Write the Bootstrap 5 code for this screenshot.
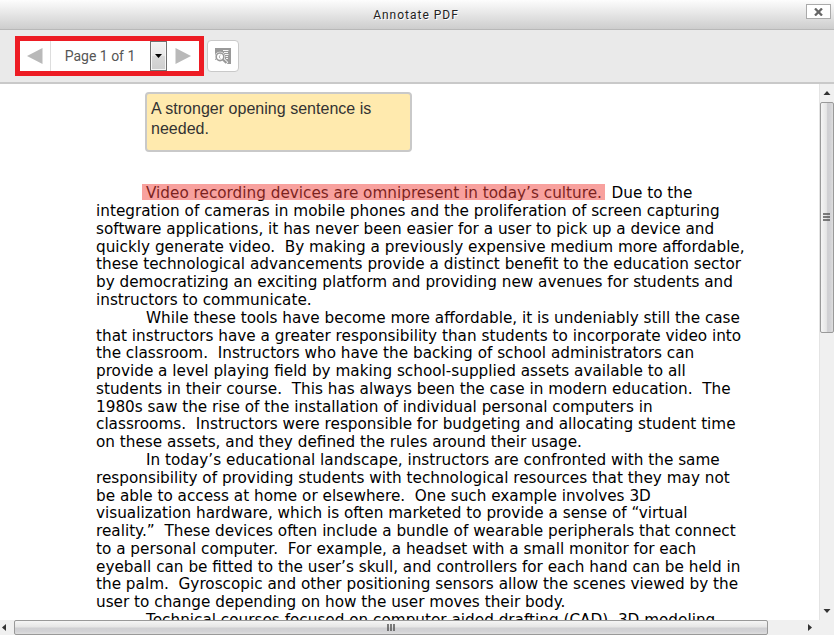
<!DOCTYPE html>
<html lang="en">
<head>
<meta charset="utf-8">
<title>Annotate PDF</title>
<link href="https://cdn.jsdelivr.net/npm/bootstrap@5.3.0/dist/css/bootstrap.min.css" rel="stylesheet">
<style>
body{height:635px;overflow:hidden;background:#fff}
.titlebar{height:30px;background:linear-gradient(#fdfdfd,#cdcdcd);border-bottom:1px solid #b8b8b8;font:12px/30px Roboto,sans-serif;letter-spacing:1px;color:#222;text-shadow:1px 1px 0 #fff}
.titlebar span{padding-right:2px}
.close-btn{right:3px;top:4px;width:25px;height:15px;border:1px solid #aaa;background:#fff}
.toolbar{height:54px;background:#eaeaea;border-bottom:2px solid #c9c9c9;padding:6px 0 0 15px;gap:3px}
.pager{width:189px;height:40px;border:5px solid #ed1c24;background:#fff}
.pg-btn{width:31px;padding:0;border:0;border-radius:0;background:#fff;line-height:1}
.pg-prev{width:30px}
.pg-label{width:100px;border-left:1px solid #ddd;font:14px/30px Roboto,sans-serif;color:#555;padding-right:1px}
.pg-drop{width:17px;border:1px solid #707070;background:linear-gradient(#f3f3f3,#e8e8e8 48%,#d8d8d8 52%,#cecece);box-shadow:inset 0 0 0 1px #f6f6f6}
.find-btn{width:32px;height:32px;border:1px solid #c9c9c9;border-radius:4px;background:#fff;margin-top:4px}
.viewer{height:536px}
.paper{overflow:hidden;padding:8px 0 0 96px}
.note{margin-left:49px;width:267px;height:60px;background:#ffeaae;border:2px solid #c9c9c9;border-radius:4px;padding:5px 4px;font:16px/20px "Liberation Sans",Arial,sans-serif;letter-spacing:.02px;color:#333}
.essay{margin-top:33.3px;font:15.265px/17.785px "DejaVu Sans",sans-serif;color:#000;white-space:pre}
.essay .first{padding-left:50px}
.hl{left:46px;top:-1.3px;width:463px;height:16px;background:rgba(241,67,62,.5)}
.vbar{width:15px;background:#f0f0f0;border-left:1px solid #e4e4e4}
.vthumb{height:231px;border:1px solid #999;border-radius:2px;background:linear-gradient(90deg,#f5f5f5,#e6e6e6 45%,#cfcfd2 55%,#d3d3d6 80%,#dedede)}
.hbar{height:15px;background:#f0f0f0}
.hthumb{width:754px;border:1px solid #999;border-radius:2px;background:linear-gradient(#f5f5f5,#e6e6e6 45%,#cfcfd2 55%,#d3d3d6 80%,#dedede)}
.to-end{margin-left:36px}
svg{display:block}
</style>
</head>
<body>
<header class="titlebar position-relative text-center"><span>Annotate PDF</span>
<button class="close-btn position-absolute p-0 d-flex align-items-center justify-content-center" aria-label="Close"><svg width="9" height="8" viewBox="0 0 9 8"><path d="M1 .5L8 7.5M8 .5L1 7.5" stroke="#666" stroke-width="2.3"/></svg></button>
</header>
<div class="toolbar d-flex">
<div class="pager d-flex">
<button class="btn pg-btn pg-prev d-flex align-items-center justify-content-center" aria-label="Previous"><svg width="16" height="16"><path d="M0 8L15.500 0V16Z" fill="#b9b9b9"/></svg></button>
<div class="pg-label text-center">Page 1 of 1</div>
<div class="pg-drop d-flex align-items-center justify-content-center"><svg width="7" height="4"><path d="M0 0H7L3.500 4Z" fill="#000"/></svg></div>
<button class="btn pg-btn d-flex align-items-center justify-content-center" aria-label="Next"><svg width="16" height="16"><path d="M16 8L.5 0V16Z" fill="#b9b9b9"/></svg></button>
</div>
<button class="find-btn p-0 d-flex align-items-center justify-content-center" aria-label="Find"><svg width="18" height="18" viewBox="0 0 18 18"><path d="M1 1H17V17H1Z" fill="#999"/><path d="M9 3.500H14.500M10 5.500H14M11 7.500H14.500M11.500 9.500H14M12 11.500H14" stroke="#fff" stroke-width=".9"/><circle cx="6" cy="9.800" r="5.100" fill="#fff"/><path d="M0 13H9L13.500 17V18H0Z" fill="#fff"/><path d="M9 12.500L13 16.500" stroke="#fff" stroke-width="3.600"/><circle cx="6" cy="9.800" r="3.800" fill="#fff" stroke="#999" stroke-width="1.600"/><path d="M6.500 8A2 2 0 0 0 6.500 11.600" fill="none" stroke="#aaa"/><path d="M8.800 12.500L12.500 16" stroke="#999" stroke-width="2.200"/></svg></button>
</div>
<main class="viewer d-flex">
<div class="paper flex-grow-1">
<div class="note">A stronger opening sentence is needed.</div>
<div class="essay position-relative"><div class="first">Video recording devices are omnipresent in today’s culture.  Due to the</div><div>integration of cameras in mobile phones and the proliferation of screen capturing</div><div>software applications, it has never been easier for a user to pick up a device and</div><div>quickly generate video.  By making a previously expensive medium more affordable,</div><div>these technological advancements provide a distinct benefit to the education sector</div><div>by democratizing an exciting platform and providing new avenues for students and</div><div>instructors to communicate.</div><div class="first">While these tools have become more affordable, it is undeniably still the case</div><div>that instructors have a greater responsibility than students to incorporate video into</div><div>the classroom.  Instructors who have the backing of school administrators can</div><div>provide a level playing field by making school-supplied assets available to all</div><div>students in their course.  This has always been the case in modern education.  The</div><div>1980s saw the rise of the installation of individual personal computers in</div><div>classrooms.  Instructors were responsible for budgeting and allocating student time</div><div>on these assets, and they defined the rules around their usage.</div><div class="first">In today’s educational landscape, instructors are confronted with the same</div><div>responsibility of providing students with technological resources that they may not</div><div>be able to access at home or elsewhere.  One such example involves 3D</div><div>visualization hardware, which is often marketed to provide a sense of “virtual</div><div>reality.”  These devices often include a bundle of wearable peripherals that connect</div><div>to a personal computer.  For example, a headset with a small monitor for each</div><div>eyeball can be fitted to the user’s skull, and controllers for each hand can be held in</div><div>the palm.  Gyroscopic and other positioning sensors allow the scenes viewed by the</div><div>user to change depending on how the user moves their body.</div><div class="first">Technical courses focused on computer aided drafting (CAD), 3D modeling,</div><div class="hl position-absolute"></div></div>
</div>
<div class="vbar d-flex flex-column flex-shrink-0">
<svg width="14" height="18"><path d="M3.500 11H10.500L7 7Z" fill="#333"/></svg>
<div class="vthumb d-flex align-items-center justify-content-center"><svg width="8" height="9"><path d="M0 1H7M0 4H7M0 7H7" stroke="#555" stroke-width="1.500"/></svg></div>
<svg class="mt-auto" width="14" height="18"><path d="M3.500 7H10.500L7 11Z" fill="#333"/></svg>
</div>
</main>
<footer class="hbar d-flex">
<svg width="14" height="15"><path d="M6 4V11L2 7.500Z" fill="#333"/></svg>
<div class="hthumb d-flex align-items-center justify-content-center"><svg width="9" height="8"><path d="M1 0V7M4 0V7M7 0V7" stroke="#555" stroke-width="1.500"/></svg></div>
<svg class="to-end" width="14" height="15"><path d="M4 4V11L8 7.500Z" fill="#333"/></svg>
</footer>
<script src="https://cdn.jsdelivr.net/npm/bootstrap@5.3.0/dist/js/bootstrap.bundle.min.js"></script>
</body>
</html>
